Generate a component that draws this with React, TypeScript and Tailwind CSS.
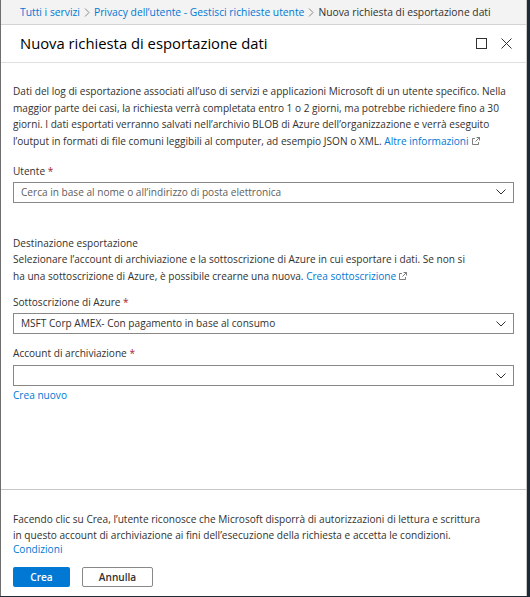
function Chevron() {
  return (
    <svg width="10" height="6" viewBox="0 0 10 6" className="shrink-0">
      <path d="M0.5 0.5 L5 5 L9.5 0.5" fill="none" stroke="#323130" strokeWidth="1" />
    </svg>
  )
}

function Crumb() {
  return (
    <svg width="6" height="9" viewBox="0 0 6 9" className="mx-[4px] shrink-0">
      <path d="M1 0.5 L5 4.5 L1 8.5" fill="none" stroke="#8a8886" strokeWidth="1" />
    </svg>
  )
}

function ExternalIcon() {
  return (
    <svg width="8" height="8" viewBox="0 0 8 8" className="ml-[3px] inline-block align-baseline">
      <path d="M3 1.5 H0.5 V7.5 H6.5 V5" fill="none" stroke="#605e5c" strokeWidth="0.8" />
      <path d="M4.5 0.5 H7.5 V3.5 M7.5 0.5 L3.5 4.5" fill="none" stroke="#605e5c" strokeWidth="0.8" />
    </svg>
  )
}

function Star() {
  return <span className="text-[#a4262c]"> *</span>
}

function Select({ value, placeholder }: { value?: string; placeholder?: string }) {
  return (
    <div className="flex h-[21px] items-center justify-between border border-[#8a8886] bg-white pl-[7px] pr-[7px]">
      {value ? (
        <span className="text-[#323130]">{value}</span>
      ) : (
        <span className="text-[#605e5c]">{placeholder ?? ""}</span>
      )}
      <Chevron />
    </div>
  )
}

export default function App() {
  return (
    <div
      className="flex h-[597px] w-[530px] bg-[#1e2b37] text-[10.1px] leading-[16.7px] text-[#323130]"
      style={{ fontFamily: "'Open Sans', 'Noto Sans', sans-serif" }}
    >
      <div className="flex h-[596px] w-[527px] flex-col border-l border-r border-l-[#6e6e6e] border-r-[#c8c8c8] bg-white">
        {/* breadcrumb */}
        <div className="flex h-[25px] shrink-0 items-center border-b border-[#d4d4d4] bg-[#f3f3f3] pl-[19px] text-[10.3px]">
          <span className="text-[#0078d4]">Tutti i servizi</span>
          <Crumb />
          <span className="text-[#0078d4]">Privacy dell’utente - Gestisci richieste utente</span>
          <Crumb />
          <span>Nuova richiesta di esportazione dati</span>
        </div>

        {/* header */}
        <div className="flex h-[38px] shrink-0 items-center justify-between border-b border-[#e1dfdd] pl-[19px] pr-[14px]">
          <h1 className="text-[14.8px] leading-none text-black">Nuova richiesta di esportazione dati</h1>
          <div className="flex items-center gap-[14px]">
            <svg width="11" height="11" viewBox="0 0 11 11">
              <rect x="0.5" y="0.5" width="10" height="10" fill="none" stroke="#323130" strokeWidth="1" />
            </svg>
            <svg width="11" height="11" viewBox="0 0 11 11">
              <path d="M0.5 0.5 L10.5 10.5 M10.5 0.5 L0.5 10.5" fill="none" stroke="#323130" strokeWidth="1" />
            </svg>
          </div>
        </div>

        {/* body */}
        <div className="flex-1 px-[12px] pt-[20px]">
          <p className="whitespace-nowrap">
            Dati del log di esportazione associati all’uso di servizi e applicazioni Microsoft di un utente specifico. Nella
            <br />
            maggior parte dei casi, la richiesta verrà completata entro 1 o 2 giorni, ma potrebbe richiedere fino a 30
            <br />
            giorni. I dati esportati verranno salvati nell’archivio BLOB di Azure dell’organizzazione e verrà eseguito
            <br />
            l’output in formati di file comuni leggibili al computer, ad esempio JSON o XML.{" "}
            <span className="text-[#0078d4]">Altre informazioni</span>
            <ExternalIcon />
          </p>

          <div className="mt-[13px]">
            Utente
            <Star />
          </div>
          <div className="mt-[2px]">
            <Select placeholder="Cerca in base al nome o all’indirizzo di posta elettronica" />
          </div>

          <div className="mt-[32px]">Destinazione esportazione</div>
          <p className="whitespace-nowrap">
            Selezionare l’account di archiviazione e la sottoscrizione di Azure in cui esportare i dati. Se non si
            <br />
            ha una sottoscrizione di Azure, è possibile crearne una nuova.{" "}
            <span className="text-[#0078d4]">Crea sottoscrizione</span>
            <ExternalIcon />
          </p>

          <div className="mt-[9px]">
            Sottoscrizione di Azure
            <Star />
          </div>
          <div className="mt-[3px]">
            <Select value="MSFT Corp AMEX- Con pagamento in base al consumo" />
          </div>

          <div className="mt-[11px]">
            Account di archiviazione
            <Star />
          </div>
          <div className="mt-[3px]">
            <Select />
          </div>
          <div className="mt-[1px] text-[#0078d4]">Crea nuovo</div>
        </div>

        {/* footer */}
        <div className="shrink-0 border-t border-[#c8c6c4] px-[12px] pt-[22px] pb-[9px]">
          <p className="whitespace-nowrap leading-[15.5px]">
            Facendo clic su Crea, l’utente riconosce che Microsoft disporrà di autorizzazioni di lettura e scrittura
            <br />
            in questo account di archiviazione ai fini dell’esecuzione della richiesta e accetta le condizioni.
          </p>
          <div className="leading-[13px] text-[#0078d4]">Condizioni</div>
          <div className="mt-[11px] flex gap-[12px]">
            <button className="h-[20px] w-[57px] rounded-[2px] bg-[#0078d4] font-semibold text-white">Crea</button>
            <button className="h-[20px] w-[71px] rounded-[2px] border border-[#8a8886] bg-white font-semibold text-[#323130]">
              Annulla
            </button>
          </div>
        </div>
      </div>
    </div>
  )
}
